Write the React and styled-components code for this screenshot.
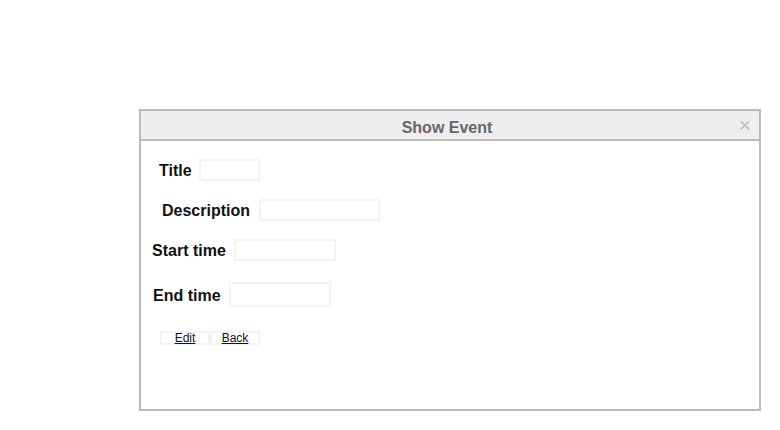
import React from "react";
import styled, { createGlobalStyle } from "styled-components";

const GlobalStyle = createGlobalStyle`
  body {
    margin: 0;
    background: #ffffff;
    font-family: "Liberation Sans", Arial, sans-serif;
  }
`;

const Page = styled.div`
  width: 780px;
  height: 430px;
  padding: 109px 0 0 139px;
  box-sizing: border-box;
`;

const Dialog = styled.div`
  width: 622px;
  height: 302px;
  border: 2px solid #bbbbbb;
  box-sizing: border-box;
  display: flex;
  flex-direction: column;
`;

const Header = styled.div`
  position: relative;
  height: 30px;
  background: #eeeeee;
  border-bottom: 2px solid #bbbbbb;
  box-sizing: border-box;
  display: flex;
  align-items: flex-end;
  justify-content: center;
  padding-bottom: 2px;
`;

const HeaderTitle = styled.span`
  font-size: 16px;
  font-weight: bold;
  color: #666666;
  margin-left: -6px;
`;

const Close = styled.span`
  position: absolute;
  right: 8px;
  top: 3px;
  font-size: 21px;
  color: #bbbbbb;
  line-height: 22px;
`;

const Body = styled.div`
  display: flex;
  flex-direction: column;
`;

const Row = styled.div`
  display: flex;
  align-items: center;
  gap: ${(p) => p.gap || 8}px;
  margin-top: ${(p) => p.top}px;
  padding-left: ${(p) => p.left}px;
`;

const Label = styled.label`
  font-size: 16px;
  font-weight: bold;
  color: #111111;
  padding-top: 2px;
`;

const Field = styled.input`
  width: ${(p) => p.w}px;
  height: ${(p) => p.h || 22}px;
  border: 2px solid #f3f3f3;
  box-sizing: border-box;
  background: #ffffff;
  padding: 0;
  outline: none;
`;

const Buttons = styled.div`
  display: flex;
  margin-top: 24px;
  padding-left: 19px;
`;

const Button = styled.button`
  width: 50px;
  height: 14px;
  border: 2px solid #f3f3f3;
  background: #ffffff;
  box-sizing: border-box;
  padding: 0;
  font-family: "Liberation Sans", Arial, sans-serif;
  font-size: 12px;
  line-height: 10px;
  color: #111111;
  text-decoration: underline;
  cursor: pointer;
`;

export default function App() {
  return (
    <Page>
      <GlobalStyle />
      <Dialog>
        <Header>
          <HeaderTitle>Show Event</HeaderTitle>
          <Close>×</Close>
        </Header>
        <Body>
          <Row top={18} left={18} gap={7}>
            <Label>Title</Label>
            <Field w={61} />
          </Row>
          <Row top={18} left={21} gap={9}>
            <Label>Description</Label>
            <Field w={121} />
          </Row>
          <Row top={18} left={11}>
            <Label>Start time</Label>
            <Field w={102} />
          </Row>
          <Row top={21} left={12}>
            <Label>End time</Label>
            <Field w={102} h={25} />
          </Row>
          <Buttons>
            <Button>Edit</Button>
            <Button>Back</Button>
          </Buttons>
        </Body>
      </Dialog>
    </Page>
  );
}
